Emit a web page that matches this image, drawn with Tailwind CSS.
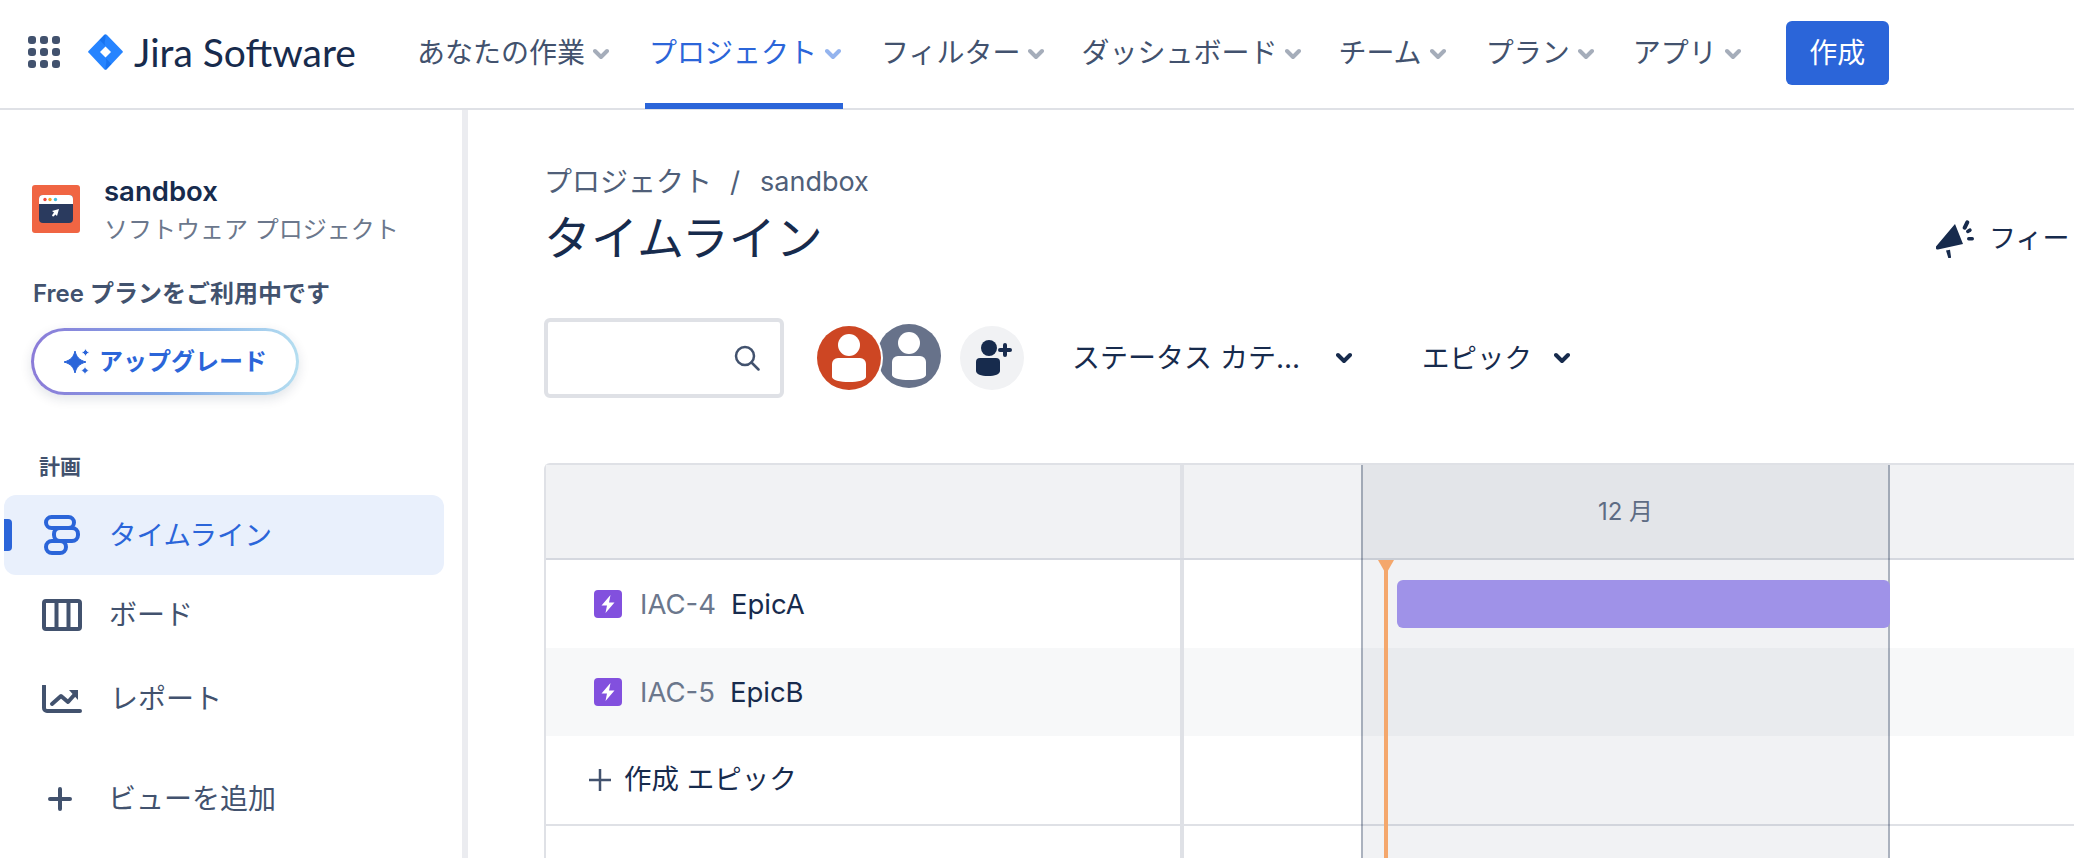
<!DOCTYPE html>
<html lang="ja">

<head>
  <meta charset="UTF-8">
  <meta name="viewport" content="width=device-width, initial-scale=1.0">
  <title>タイムライン - Jira Software</title>
  <script src="https://cdn.jsdelivr.net/npm/@tailwindcss/browser@4"></script>
</head>

<body class="bg-white">
  <div class="w-[2074px] h-[858px] overflow-hidden flex flex-col font-['Inter','Noto_Sans_CJK_JP',sans-serif] text-[#42526e]">

    <!-- top nav -->
    <header class="h-[110px] shrink-0 border-b-2 border-[#dfe1e6] flex items-center pl-[28px] relative">
      <svg class="w-[32px] h-[32px] shrink-0 mb-[4px]" viewBox="0 0 32 32" fill="#42526e">
        <rect x="0" y="0" width="8" height="8" rx="3" /><rect x="12" y="0" width="8" height="8" rx="3" /><rect x="24" y="0" width="8" height="8" rx="3" />
        <rect x="0" y="12" width="8" height="8" rx="3" /><rect x="12" y="12" width="8" height="8" rx="3" /><rect x="24" y="12" width="8" height="8" rx="3" />
        <rect x="0" y="24" width="8" height="8" rx="3" /><rect x="12" y="24" width="8" height="8" rx="3" /><rect x="24" y="24" width="8" height="8" rx="3" />
      </svg>
      <svg class="w-[35px] h-[36px] shrink-0 ml-[28px] mb-[4px]" viewBox="0 0 35 36">
        <path fill="#2684ff" d="M16 1 1 16.500a1.600 1.600 0 0 0 0 2.600L16 35a2 2 0 0 0 3 0l15-15.900a1.600 1.600 0 0 0 0-2.600L19 1a2 2 0 0 0-3 0Z" />
        <path fill="#0c66e4" d="M17.500 12 11.500 6 17 .4c.3.3 0 .6.5.6.5 5-2 7-0 11Z" opacity=".55" />
        <path fill="#0c66e4" d="M17.500 24l6 6-6 6c-.3-5 2-8 0-12Z" opacity=".55" />
        <path fill="#fff" d="M17.500 12.500 23 18l-5.500 5.500L12 18Z" />
      </svg>
      <span class="ml-[11px] mb-[3px] text-[39px] font-normal leading-none text-[#172b4d] font-['Lato',sans-serif] whitespace-nowrap">Jira Software</span>

      <nav class="flex items-center ml-[61px] text-[28px] leading-[36px] mb-[3px] whitespace-nowrap">
        <a class="flex items-center">あなたの作業<svg class="w-[16px] h-[12px] ml-[8px] mt-[2px]" viewBox="0 0 16 12"><path d="M2 3l6 6 6-6" fill="none" stroke="#a5adba" stroke-width="4" stroke-linecap="round" stroke-linejoin="round" /></svg></a>
        <a class="flex items-center ml-[40px] text-[#2b65d9]">プロジェクト<svg class="w-[16px] h-[12px] ml-[8px] mt-[2px]" viewBox="0 0 16 12"><path d="M2 3l6 6 6-6" fill="none" stroke="#94b4ee" stroke-width="4" stroke-linecap="round" stroke-linejoin="round" /></svg></a>
        <a class="flex items-center ml-[40px]">フィルター<svg class="w-[16px] h-[12px] ml-[8px] mt-[2px]" viewBox="0 0 16 12"><path d="M2 3l6 6 6-6" fill="none" stroke="#a5adba" stroke-width="4" stroke-linecap="round" stroke-linejoin="round" /></svg></a>
        <a class="flex items-center ml-[37px]">ダッシュボード<svg class="w-[16px] h-[12px] ml-[8px] mt-[2px]" viewBox="0 0 16 12"><path d="M2 3l6 6 6-6" fill="none" stroke="#a5adba" stroke-width="4" stroke-linecap="round" stroke-linejoin="round" /></svg></a>
        <a class="flex items-center ml-[37px]">チーム<svg class="w-[16px] h-[12px] ml-[8px] mt-[2px]" viewBox="0 0 16 12"><path d="M2 3l6 6 6-6" fill="none" stroke="#a5adba" stroke-width="4" stroke-linecap="round" stroke-linejoin="round" /></svg></a>
        <a class="flex items-center ml-[40px]">プラン<svg class="w-[16px] h-[12px] ml-[8px] mt-[2px]" viewBox="0 0 16 12"><path d="M2 3l6 6 6-6" fill="none" stroke="#a5adba" stroke-width="4" stroke-linecap="round" stroke-linejoin="round" /></svg></a>
        <a class="flex items-center ml-[39px]">アプリ<svg class="w-[16px] h-[12px] ml-[8px] mt-[2px]" viewBox="0 0 16 12"><path d="M2 3l6 6 6-6" fill="none" stroke="#a5adba" stroke-width="4" stroke-linecap="round" stroke-linejoin="round" /></svg></a>
      </nav>
      <button class="ml-[45px] mb-[2px] w-[103px] h-[64px] shrink-0 rounded-[6px] bg-[#2b65d9] text-white text-[28px]">作成</button>

      <!-- active tab underline -->
      <div class="absolute left-[645px] top-[103px] w-[198px] h-[6px] bg-[#2b65d9]"></div>
    </header>

    <div class="flex flex-1 min-h-0">
      <!-- sidebar -->
      <aside class="w-[468px] shrink-0 border-r-[6px] border-[#ebecf0] pt-[63px]">
        <div class="flex pl-[32px]">
          <svg class="w-[48px] h-[48px] mt-[12px] shrink-0" viewBox="0 0 48 48">
            <rect width="48" height="48" rx="3" fill="#f06543" />
            <rect x="7" y="10" width="34" height="28" rx="4" fill="#2a3a5e" />
            <path d="M7 14a4 4 0 0 1 4-4h26a4 4 0 0 1 4 4v5H7Z" fill="#fff" />
            <circle cx="13" cy="14.500" r="1.700" fill="#f0483e" /><circle cx="18" cy="14.500" r="1.700" fill="#f5a623" /><circle cx="23.500" cy="14.500" r="1.700" fill="#3fbfe0" />
            <path d="M27 24l-2 7-1.500-1.500-2 2-1.500-.5.500-1.500 1.500-2L20 26Z" fill="#fff" />
          </svg>
          <div class="ml-[24px]">
            <div class="text-[27.500px] leading-[36px] font-semibold text-[#172b4d]">sandbox</div>
            <div class="text-[24px] leading-[41px] text-[#6b778c]">ソフトウェア プロジェクト</div>
          </div>
        </div>
        <div class="mt-[28px] pl-[33px] text-[24px] leading-[32px] font-semibold">Free プランをご利用中です</div>
        <div class="ml-[31px] mt-[18px] w-[268px] h-[67px] rounded-full p-[3px] bg-linear-to-r from-[#8b7bd8] via-[#7fa6e6] to-[#b5def0] shadow-[0_4px_12px_rgba(9,30,66,0.12)]">
          <div class="w-full h-full rounded-full bg-white flex items-center pl-[29px] text-[#2b65d9] text-[24px] font-semibold">
            <svg class="w-[28px] h-[28px] mr-[8px] shrink-0" viewBox="0 0 28 28" fill="#2b65d9" stroke-linejoin="round">
              <path d="M12 3c1.500 6 4 9 11 11-7 2-9.500 5-11 11-1.500-6-4-9-11-11 7-2 9.500-5 11-11Z" stroke="#2b65d9" stroke-width="1" />
              <path d="M22.500 0c.7 2.500 1.800 3.800 4.500 4.500-2.700.7-3.800 2-4.500 4.500-.7-2.500-1.800-3.800-4.500-4.500 2.700-.7 3.800-2 4.500-4.500Z" stroke="#fff" stroke-width="1" />
              <path d="M22 18c.7 2.500 1.800 3.800 4.500 4.500-2.700.7-3.800 2-4.500 4.500-.7-2.500-1.800-3.800-4.500-4.500 2.700-.7 3.800-2 4.500-4.500Z" stroke="#fff" stroke-width="1" />
            </svg>
            アップグレード
          </div>
        </div>

        <div class="mt-[58px] pl-[39px] text-[21px] leading-[28px] font-bold">計画</div>
        <nav class="text-[28px] leading-[36px]">
          <a class="relative mt-[14px] ml-[4px] w-[440px] h-[80px] rounded-[12px] bg-[#e9f0fc] flex items-center pl-[40px] text-[#2b65d9]">
            <span class="absolute left-0 top-[24px] w-[8px] h-[32px] rounded-r-[4px] bg-[#2b65d9]"></span>
            <svg class="w-[36px] h-[40px] shrink-0" viewBox="0 0 36 40" fill="none" stroke="#2b65d9" stroke-width="4">
              <rect x="2" y="2" width="28" height="11" rx="5.500" />
              <rect x="10" y="13" width="24" height="13" rx="6" />
              <rect x="2" y="26" width="20" height="12" rx="6" />
            </svg>
            <span class="ml-[29px] text-[27.500px]">タイムライン</span>
          </a>
          <a class="ml-[4px] h-[80px] flex items-center pl-[38px]">
            <svg class="w-[40px] h-[32px] shrink-0" viewBox="0 0 40 32" fill="none" stroke="#42526e" stroke-width="4" stroke-linejoin="round">
              <rect x="2" y="2" width="36" height="28" rx="2" />
              <path d="M14.500 2v28M26.500 2v28" />
            </svg>
            <span class="ml-[27px]">ボード</span>
          </a>
          <a class="ml-[4px] mt-[4px] h-[80px] flex items-center pl-[38px]">
            <svg class="w-[40px] h-[28px] shrink-0" viewBox="0 0 40 28" fill="none" stroke="#42526e" stroke-width="4" stroke-linejoin="round" stroke-linecap="round">
              <path d="M2 1v22a3 3 0 0 0 3 3h33" />
              <path d="M10 19l9-8 7 6 8-9" />
              <path d="M27 5h9v10Z" fill="#42526e" stroke="none" />
            </svg>
            <span class="ml-[28px]">レポート</span>
          </a>
          <a class="ml-[4px] mt-[20px] h-[80px] flex items-center pl-[44px]">
            <svg class="w-[24px] h-[24px] shrink-0" viewBox="0 0 24 24" fill="none" stroke="#42526e" stroke-width="4" stroke-linecap="round">
              <path d="M12 2v20M2 12h20" />
            </svg>
            <span class="ml-[36px]">ビューを追加</span>
          </a>
        </nav>
      </aside>

      <!-- main -->
      <main class="flex-1 min-w-0 pl-[76px] pt-[54px] overflow-hidden">
        <div class="relative">
          <div class="text-[28px] leading-[36px] text-[#505f79] flex">
            <span>プロジェクト</span><span class="ml-[18px]">/</span><span class="ml-[20px] text-[27px]">sandbox</span>
          </div>
          <h1 class="mt-[10px] text-[47px] leading-[55px] text-[#172b4d] font-normal">タイムライン</h1>
          <!-- feedback button sits at the far right of the title -->
          <div class="absolute left-[1392px] top-[55px] flex items-center text-[27px] text-[#172b4d] whitespace-nowrap">
            <svg class="w-[40px] h-[38px] shrink-0" viewBox="0 0 40 38" fill="#172b4d">
              <path d="M19 4 27 24 2 29.500a2 2 0 0 1-2-3Z" />
              <path d="M10 30.500l4-.7 1 7a1.500 1.500 0 0 1-3 .2Z" />
              <rect x="28" y="0" width="4" height="10" rx="2" transform="rotate(25 30 5)" />
              <rect x="31" y="8" width="3.500" height="6" rx="1.700" transform="rotate(60 33 11)" />
              <rect x="33" y="16" width="3.500" height="7" rx="1.700" transform="rotate(90 35 19)" />
            </svg>
            <span class="ml-[13px]">フィードバック</span>
          </div>
        </div>

        <div class="mt-[53px] h-[80px] flex items-center whitespace-nowrap text-[#172b4d] text-[28px]">
          <div class="w-[240px] h-[80px] shrink-0 border-[4px] border-[#dfe1e6] rounded-[6px] flex items-center justify-end pr-[20px]">
            <svg class="w-[26px] h-[26px]" viewBox="0 0 26 26" fill="none" stroke="#42526e" stroke-width="2.500" stroke-linecap="round">
              <circle cx="11" cy="11" r="9" /><path d="M17.500 17.500l7 7" />
            </svg>
          </div>
          <div class="ml-[33px] flex shrink-0">
            <svg class="w-[68px] h-[68px] z-10 -mx-[2px]" viewBox="0 0 68 68">
              <circle cx="34" cy="34" r="34" fill="#fff" /><circle cx="34" cy="34" r="32" fill="#cd4623" />
              <circle cx="34" cy="21" r="11" fill="#fff" />
              <path d="M17 40a6 6 0 0 1 6-6h22a6 6 0 0 1 6 6v13c0 3-8 5-17 5s-17-2-17-5Z" fill="#fff" />
            </svg>
            <svg class="w-[64px] h-[64px] -ml-[4px]" viewBox="0 0 64 64">
              <circle cx="32" cy="32" r="32" fill="#67728a" />
              <circle cx="32" cy="19" r="11" fill="#fff" />
              <path d="M15 38a6 6 0 0 1 6-6h22a6 6 0 0 1 6 6v13c0 3-8 5-17 5s-17-2-17-5Z" fill="#fff" />
            </svg>
          </div>
          <div class="ml-[19px] w-[64px] h-[64px] shrink-0 rounded-full bg-[#f1f2f4] flex items-center justify-center pl-[4px]">
            <svg class="w-[36px] h-[36px]" viewBox="0 0 36 36" fill="#172b4d">
              <circle cx="13" cy="8" r="8" />
              <path d="M0 22a4 4 0 0 1 4-4h16a4 4 0 0 1 4 4v9c0 3-5 5-12 5S0 34 0 31Z" />
              <path d="M28 3a2 2 0 0 1 2 2v3h3a2 2 0 0 1 0 4h-3v3a2 2 0 0 1-4 0v-3h-3a2 2 0 0 1 0-4h3V5a2 2 0 0 1 2-2Z" transform="translate(1 0)" />
            </svg>
          </div>
          <span class="ml-[48px] leading-[36px]">ステータス カテ...</span>
          <svg class="ml-[36px] w-[16px] h-[15px] shrink-0" viewBox="0 0 16 15"><path d="M2 4l6 6 6-6" fill="none" stroke="#172b4d" stroke-width="4" stroke-linecap="round" stroke-linejoin="round" /></svg>
          <span class="ml-[70px] leading-[36px] text-[27.500px]">エピック</span>
          <svg class="ml-[22px] w-[16px] h-[15px] shrink-0" viewBox="0 0 16 15"><path d="M2 4l6 6 6-6" fill="none" stroke="#172b4d" stroke-width="4" stroke-linecap="round" stroke-linejoin="round" /></svg>
        </div>

        <!-- timeline table -->
        <section class="relative mt-[65px] w-[1600px] h-[500px] border-t-2 border-l-2 border-[#dfe1e6] rounded-tl-[6px] text-[#172b4d] text-[27.500px]">
          <div class="h-[95px] flex bg-[#f1f2f4] border-b-2 border-[#d5d8df]">
            <div class="w-[638px] border-r-4 border-[#dfe1e6]"></div>
          </div>
          <div class="h-[88px] flex">
            <div class="w-[638px] border-r-4 border-[#dfe1e6] flex items-center pl-[48px]">
              <svg class="w-[28px] h-[28px] shrink-0" viewBox="0 0 28 28"><rect width="28" height="28" rx="4" fill="#8250de" /><path d="M16.500 5 7.500 15.500H13L11.500 23 20.500 12.500H15Z" fill="#fff" /></svg>
              <span class="ml-[18px] pt-[2px] text-[#6b778c]">IAC-4</span><span class="ml-[15px] pt-[2px]">EpicA</span>
            </div>
          </div>
          <div class="h-[88px] flex bg-[#f7f8f9]">
            <div class="w-[638px] border-r-4 border-[#dfe1e6] flex items-center pl-[48px]">
              <svg class="w-[28px] h-[28px] shrink-0" viewBox="0 0 28 28"><rect width="28" height="28" rx="4" fill="#8250de" /><path d="M16.500 5 7.500 15.500H13L11.500 23 20.500 12.500H15Z" fill="#fff" /></svg>
              <span class="ml-[18px] pt-[2px] text-[#6b778c]">IAC-5</span><span class="ml-[15px] pt-[2px]">EpicB</span>
            </div>
          </div>
          <div class="h-[90px] flex border-b-2 border-[#dfe1e6]">
            <div class="w-[638px] border-r-4 border-[#dfe1e6] flex items-center pl-[42px]">
              <svg class="w-[24px] h-[24px] shrink-0" viewBox="0 0 24 24" fill="none" stroke="#42526e" stroke-width="2.500"><path d="M12 1v22M1 12h22" /></svg>
              <span class="ml-[12px]">作成 エピック</span>
            </div>
          </div>
          <div class="h-[200px] flex">
            <div class="w-[638px] border-r-4 border-[#dfe1e6]"></div>
          </div>

          <!-- current month band over the rows -->
          <div class="absolute left-[815px] top-0 w-[529px] bottom-0 bg-[#091e42]/[0.06] border-x-2 border-[#091e42]/30">
            <div class="h-[93px] flex items-center justify-center text-[24px] text-[#5e6c84]">12 月</div>
          </div>
          <!-- today marker -->
          <div class="absolute left-[838px] top-[95px] bottom-0 w-[4px] bg-[#f4a76c]"></div>
          <div class="absolute left-[832px] top-[95px] w-0 h-0 border-x-[8px] border-x-transparent border-t-[14px] border-t-[#f4a76c]"></div>
          <!-- epic bar -->
          <div class="absolute left-[851px] top-[115px] w-[493px] h-[48px] rounded-[6px] bg-[#9f92e8]"></div>
        </section>
      </main>
    </div>
  </div>
</body>

</html>
